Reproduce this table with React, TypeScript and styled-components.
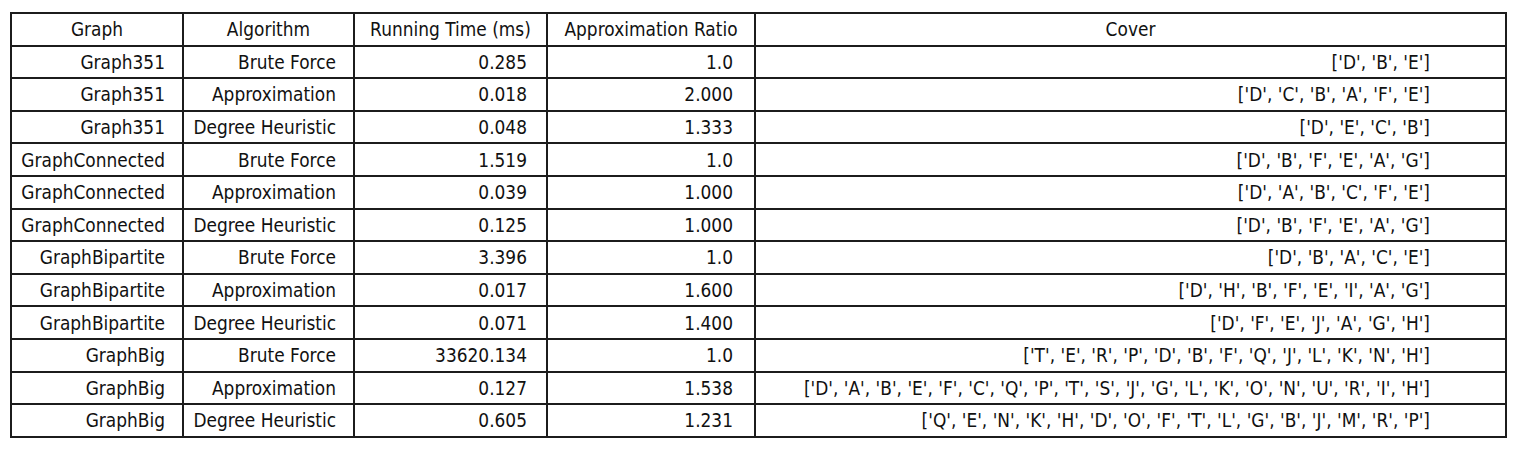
import React from 'react';
import styled, { createGlobalStyle } from 'styled-components';

const GlobalStyle = createGlobalStyle`
    body {
        margin: 0;
        background: #ffffff;
        font-family: "DejaVu Sans", "Liberation Sans", sans-serif;
    }
`;

const Page = styled.div`
    box-sizing: border-box;
    width: 1516px;
    height: 450px;
    padding: 12px 0 0 10px;
    background: #ffffff;
`;

const Table = styled.table`
    border-collapse: collapse;
    table-layout: fixed;
    width: 1495px;
    color: #111;
    font-size: 17px;
`;

const HeadCell = styled.th`
    border: 2px solid #1c1c1c;
    height: 30.6px;
    padding: 0;
    font-weight: normal;
    text-align: center;
    white-space: nowrap;
`;

const Cell = styled.td<{ $pad: number }>`
    border: 2px solid #1c1c1c;
    height: 30.6px;
    padding: 0 ${p => p.$pad}px 0 0;
    text-align: right;
    white-space: nowrap;
`;

// the source picture was squeezed sideways, so glyphs read a bit taller than wide
const Text = styled.span`
    display: inline-block;
    line-height: 1;
    transform: scaleY(1.1);
`;

type Column = { title: string; width: number };

const columns: Column[] = [
    { title: 'Graph', width: 172 },
    { title: 'Algorithm', width: 171 },
    { title: 'Running Time (ms)', width: 193 },
    { title: 'Approximation Ratio', width: 208 },
    { title: 'Cover', width: 751 },
];

const rows: string[][] = [
    ['Graph351', 'Brute Force', '0.285', '1.0', "['D', 'B', 'E']"],
    ['Graph351', 'Approximation', '0.018', '2.000', "['D', 'C', 'B', 'A', 'F', 'E']"],
    ['Graph351', 'Degree Heuristic', '0.048', '1.333', "['D', 'E', 'C', 'B']"],
    ['GraphConnected', 'Brute Force', '1.519', '1.0', "['D', 'B', 'F', 'E', 'A', 'G']"],
    ['GraphConnected', 'Approximation', '0.039', '1.000', "['D', 'A', 'B', 'C', 'F', 'E']"],
    ['GraphConnected', 'Degree Heuristic', '0.125', '1.000', "['D', 'B', 'F', 'E', 'A', 'G']"],
    ['GraphBipartite', 'Brute Force', '3.396', '1.0', "['D', 'B', 'A', 'C', 'E']"],
    ['GraphBipartite', 'Approximation', '0.017', '1.600', "['D', 'H', 'B', 'F', 'E', 'I', 'A', 'G']"],
    ['GraphBipartite', 'Degree Heuristic', '0.071', '1.400', "['D', 'F', 'E', 'J', 'A', 'G', 'H']"],
    ['GraphBig', 'Brute Force', '33620.134', '1.0', "['T', 'E', 'R', 'P', 'D', 'B', 'F', 'Q', 'J', 'L', 'K', 'N', 'H']"],
    ['GraphBig', 'Approximation', '0.127', '1.538', "['D', 'A', 'B', 'E', 'F', 'C', 'Q', 'P', 'T', 'S', 'J', 'G', 'L', 'K', 'O', 'N', 'U', 'R', 'I', 'H']"],
    ['GraphBig', 'Degree Heuristic', '0.605', '1.231', "['Q', 'E', 'N', 'K', 'H', 'D', 'O', 'F', 'T', 'L', 'G', 'B', 'J', 'M', 'R', 'P']"],
];

const App: React.FC = () => {
    return (
        <Page>
            <GlobalStyle />
            <Table>
                <colgroup>
                    {columns.map(col => (
                        <col key={col.title} style={{ width: col.width }} />
                    ))}
                </colgroup>
                <thead>
                    <tr>
                        {columns.map(col => (
                            <HeadCell key={col.title}><Text>{col.title}</Text></HeadCell>
                        ))}
                    </tr>
                </thead>
                <tbody>
                    {rows.map((row, i) => (
                        <tr key={`row_${i}`}>
                            {row.map((value, j) => (
                                <Cell key={`cell_${i}_${j}`} $pad={Math.round(columns[j].width * 0.1)}>
                                    <Text>{value}</Text>
                                </Cell>
                            ))}
                        </tr>
                    ))}
                </tbody>
            </Table>
        </Page>
    );
};

export default App;
